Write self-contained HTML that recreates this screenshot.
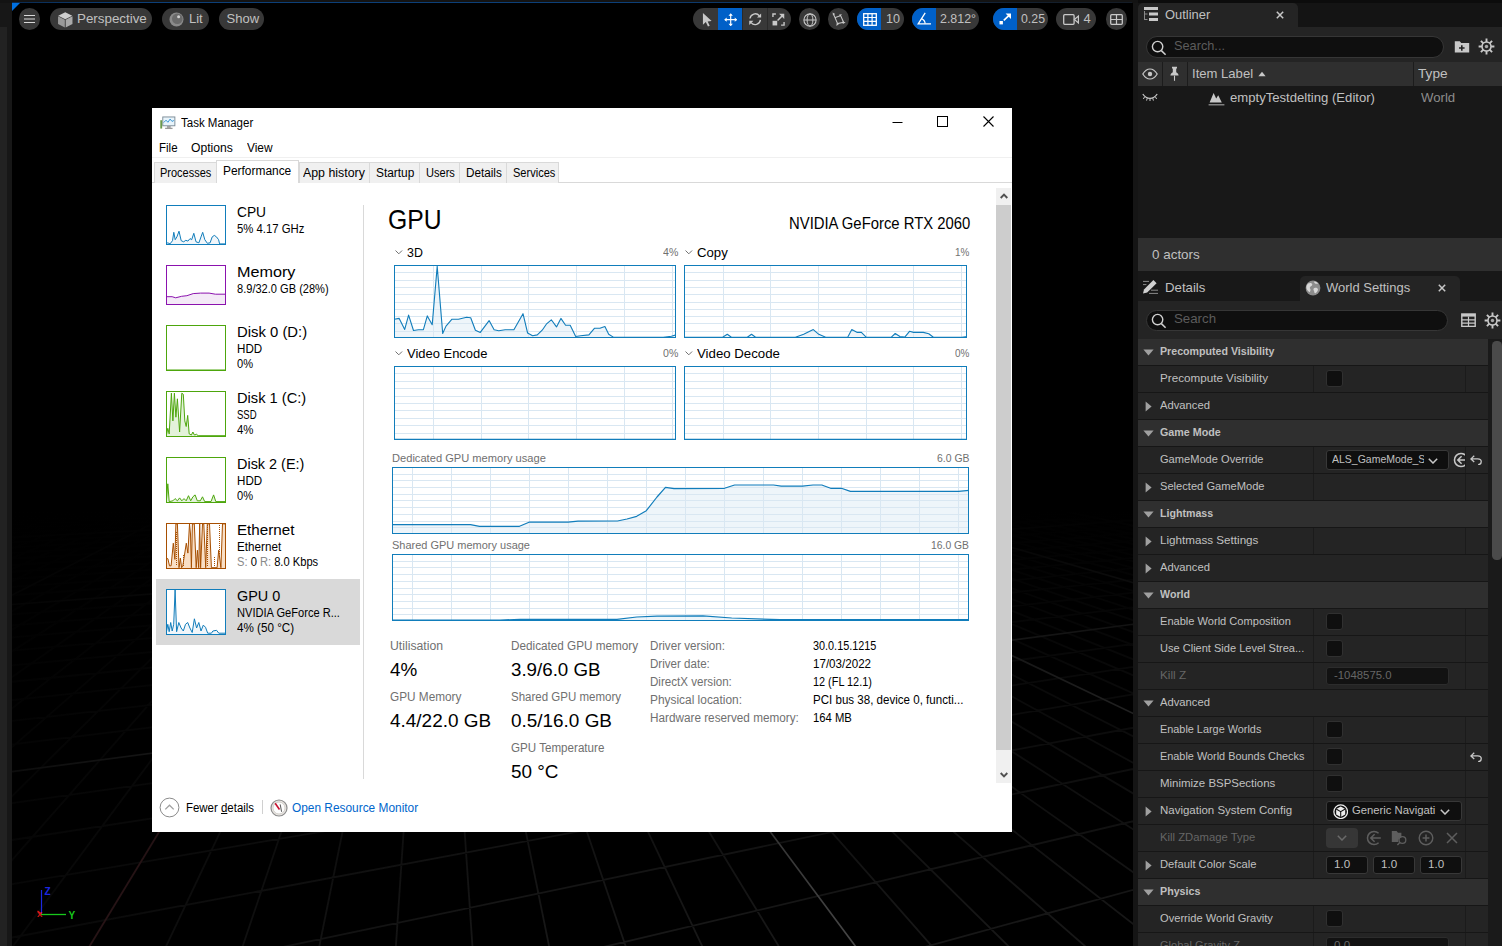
<!DOCTYPE html>
<html lang="en">
<head>
<meta charset="utf-8">
<title>Unreal Editor - Task Manager GPU</title>
<style>
*{box-sizing:border-box;margin:0;padding:0}
html,body{width:1502px;height:946px;overflow:hidden;background:#151515;font-family:"Liberation Sans",sans-serif}
#root{position:relative;width:1502px;height:946px;overflow:hidden;background:#151515}
#root div,#root span,#root svg{position:absolute}
.t{white-space:nowrap;line-height:1}
/* UE viewport */
#vp{left:12px;top:3px;width:1121px;height:943px;background:#000;overflow:hidden}
.pill{background:#383838;border-radius:11px;height:22px;top:5px;color:#c0c0c0;font-size:13px}
.pill .t{top:4px}
.blue{background:#0060c8}
/* right panel */
#rp{left:1138px;top:0;width:364px;height:946px;background:#171717;overflow:hidden;color:#c0c0c0;font-size:12px}
/* task manager */
#tm{left:152px;top:108px;width:860px;height:724px;background:#fff;color:#000;font-size:12px;overflow:hidden}
</style>
</head>
<body>
<div id="root">
<!-- left strip -->
<div style="left:0;top:0;width:12px;height:946px;background:#171717"></div>
<div style="left:0;top:27px;width:7px;height:919px;background:#222222"></div>

<div style="left:0;top:0;width:1502px;height:3px;background:#131313"></div>
<div style="left:12px;top:2px;width:1120px;height:1px;background:linear-gradient(90deg,#0a2a50,#0c3f78 10%,#0c3f78 55%,#141c26 96%)"></div>
<!-- VIEWPORT -->
<div id="vp">
<svg style="left:0;top:0" width="1121" height="943" viewBox="12 3 1121 943"><defs><linearGradient id="gf" x1="0" y1="0" x2="0" y2="1"><stop offset="0" stop-color="#000" stop-opacity="1"/><stop offset="0.15" stop-color="#000" stop-opacity="0.85"/><stop offset="1" stop-color="#000" stop-opacity="0"/></linearGradient><linearGradient id="gl" x1="0" y1="0" x2="1" y2="0"><stop offset="0" stop-color="#000" stop-opacity="0.7"/><stop offset="0.3" stop-color="#000" stop-opacity="0.45"/><stop offset="1" stop-color="#000" stop-opacity="0"/></linearGradient></defs><path d="M-42056.6 7602.3L345.6 395.0M-41079.7 7602.3L347.7 395.0M-40102.9 7602.3L349.7 395.0M-39126.0 7602.3L351.7 395.0M-38149.2 7602.3L353.7 395.0M-37172.4 7602.3L355.8 395.0M-36195.5 7602.3L357.8 395.0M-35218.7 7602.3L359.8 395.0M-34241.8 7602.3L361.9 395.0M-32288.1 7602.3L365.9 395.0M-31311.3 7602.3L368.0 395.0M-30334.5 7602.3L370.0 395.0M-29357.6 7602.3L372.0 395.0M-28380.8 7602.3L374.1 395.0M-27403.9 7602.3L376.1 395.0M-26427.1 7602.3L378.1 395.0M-25450.2 7602.3L380.2 395.0M-24473.4 7602.3L382.2 395.0M-22519.7 7602.3L386.3 395.0M-21542.9 7602.3L388.3 395.0M-20566.0 7602.3L390.3 395.0M-19589.2 7602.3L392.4 395.0M-18612.3 7602.3L394.4 395.0M-17635.5 7602.3L396.4 395.0M-16658.6 7602.3L398.4 395.0M-15681.8 7602.3L400.5 395.0M-14705.0 7602.3L402.5 395.0M-12751.3 7602.3L406.6 395.0M-11774.4 7602.3L408.6 395.0M-10797.6 7602.3L410.6 395.0M-9820.7 7602.3L412.7 395.0M-8843.9 7602.3L414.7 395.0M-7867.0 7602.3L416.7 395.0M-6890.2 7602.3L418.8 395.0M-5913.4 7602.3L420.8 395.0M-4936.5 7602.3L422.8 395.0M-2982.8 7602.3L426.9 395.0M-2006.0 7602.3L428.9 395.0M-1029.1 7602.3L431.0 395.0M-52.3 7602.3L433.0 395.0M924.5 7602.3L435.0 395.0M1901.4 7602.3L437.1 395.0M2878.2 7602.3L439.1 395.0M3855.1 7602.3L441.1 395.0M4831.9 7602.3L443.1 395.0M6785.6 7602.3L447.2 395.0M7762.4 7602.3L449.2 395.0M8739.3 7602.3L451.3 395.0M9716.1 7602.3L453.3 395.0M10693.0 7602.3L455.3 395.0M11669.8 7602.3L457.4 395.0M12646.7 7602.3L459.4 395.0M13623.5 7602.3L461.4 395.0M14600.4 7602.3L463.5 395.0M16554.0 7602.3L467.5 395.0M17530.9 7602.3L469.6 395.0M18507.7 7602.3L471.6 395.0M19484.6 7602.3L473.6 395.0M20461.4 7602.3L475.7 395.0M21438.3 7602.3L477.7 395.0M22415.1 7602.3L479.7 395.0M23391.9 7602.3L481.8 395.0M24368.8 7602.3L483.8 395.0M26322.5 7602.3L487.8 395.0M27299.3 7602.3L489.9 395.0M28276.2 7602.3L491.9 395.0M29253.0 7602.3L493.9 395.0M30229.9 7602.3L496.0 395.0M31206.7 7602.3L498.0 395.0M32183.5 7602.3L500.0 395.0M33160.4 7602.3L502.1 395.0M34137.2 7602.3L504.1 395.0M36090.9 7602.3L508.2 395.0M37067.8 7602.3L510.2 395.0M38044.6 7602.3L512.2 395.0M39021.4 7602.3L514.3 395.0M39998.3 7602.3L516.3 395.0M40975.1 7602.3L518.3 395.0M41952.0 7602.3L520.4 395.0M42928.8 7602.3L522.4 395.0M43905.7 7602.3L524.4 395.0M45859.3 7602.3L528.5 395.0M46836.2 7602.3L530.5 395.0M47813.0 7602.3L532.5 395.0M48789.9 7602.3L534.6 395.0M49766.7 7602.3L536.6 395.0M50743.6 7602.3L538.6 395.0M51720.4 7602.3L540.7 395.0M52697.3 7602.3L542.7 395.0M53674.1 7602.3L544.7 395.0M-5733.8 6704.5L2880.3 460.3M-20885.9 9884.8L2796.3 457.5M-20995.1 8171.8L2756.4 456.2M-21070.9 6982.0L2717.9 455.0M-21126.7 6107.4L2680.6 453.7M-45476.9 10525.6L2644.5 452.6M-40918.1 8597.3L2609.5 451.4M-37815.6 7284.9L2575.6 450.3M-35567.5 6334.0L2542.8 449.2M-73623.4 11259.0L2511.0 448.2M-56170.7 7616.9L2450.1 446.2M-51198.2 6579.3L2421.0 445.2M-47472.8 5801.8L2392.7 444.3M-88092.0 9604.7L2365.2 443.4M-76380.5 7982.6L2338.5 442.5M-68172.0 6845.6L2312.5 441.7M-62099.2 6004.5L2287.2 440.8M-116299.8 10207.1L2262.5 440.0M-98741.0 8387.1L2238.5 439.2M-77861.3 6222.9L2192.4 437.7M-148449.2 10893.7L2170.2 437.0M-123614.8 8837.1L2148.6 436.3M-106906.7 7453.4L2127.5 435.6M-94897.0 6458.9L2106.9 434.9M-185428.2 11683.4L2086.8 434.2M-151450.8 9340.7L2067.2 433.6M-129139.8 7802.3L2048.0 433.0M-113366.9 6714.8L2029.3 432.4M-182811.8 9908.0L1993.1 431.2M-153679.9 8187.4L1975.7 430.6M-133460.1 6993.2L1958.6 430.0M-118605.4 6115.8L1941.9 429.5M-218412.5 10552.1L1925.5 429.0M-180905.7 8614.6L1909.5 428.4M-155400.5 7297.1L1893.9 427.9M-136931.0 6343.1L1878.5 427.4M-259175.0 11289.5L1863.5 426.9M-179455.2 7630.4L1834.4 426.0M-156769.0 6589.1L1820.3 425.5M-139780.7 5809.4L1806.5 425.0M-245394.7 9626.6L1792.9 424.6M-205945.1 7997.4L1779.6 424.2M-178314.4 6856.4L1766.6 423.7M-157883.3 6012.6L1753.8 423.3M-283972.3 10232.0L1741.3 422.9M-235259.9 8403.6L1729.0 422.5M-177393.7 6231.6L1705.0 421.7M-77020.4 2928.7L1693.4 421.3M-49075.3 2009.2L1682.0 421.0M-35948.7 1577.2L1670.8 420.6M-28323.9 1326.3L1659.7 420.2M-23341.3 1162.4L1648.9 419.9M-19830.3 1046.8L1638.3 419.5M-17222.9 961.0L1627.8 419.2M-15209.9 894.8L1617.6 418.8M-12305.3 799.2L1597.5 418.2M-11223.1 763.6L1587.8 417.9M-10310.3 733.6L1578.2 417.6M-9530.2 707.9L1568.8 417.2M-8855.6 685.7L1559.5 416.9M-8266.6 666.3L1550.3 416.6M-7747.8 649.2L1541.4 416.3M-7287.5 634.1L1532.5 416.1M-6876.1 620.5L1523.8 415.8M-6172.3 597.4L1506.8 415.2M-5868.8 587.4L1498.5 414.9" stroke="#181818" stroke-width="1.8" fill="none"/><path d="M-43033.4 7602.3L343.6 395.0M-33265.0 7602.3L363.9 395.0M-23496.5 7602.3L384.2 395.0M-13728.1 7602.3L404.5 395.0M5808.8 7602.3L445.2 395.0M15577.2 7602.3L465.5 395.0M25345.6 7602.3L485.8 395.0M35114.1 7602.3L506.1 395.0M44882.5 7602.3L526.5 395.0M-7744.7 5897.4L2837.6 458.9M-63142.7 9071.9L2480.1 447.2M-86669.8 7135.9L2215.2 438.5M-101625.4 5905.2L2011.0 431.8M-211283.6 9091.3L1848.8 426.4M-201797.8 7147.6L1716.9 422.1M-13609.0 842.1L1607.5 418.5M-6506.4 608.4L1515.2 415.5" stroke="#464646" stroke-width="1.700" fill="none"/><path d="M-3959.7 7602.3L424.9 395.0" stroke="#5a2d32" stroke-width="1.8" fill="none"/><rect x="12" y="3" width="1121" height="507" fill="#000"/><rect x="12" y="500" width="500" height="446" fill="url(#gl)"/><rect x="12" y="510" width="1121" height="436" fill="url(#gf)"/><path d="M41.5 914V890" stroke="#1c28e0" stroke-width="1.2"/><path d="M41 914.5H66" stroke="#18c81c" stroke-width="1.3"/><path d="M41.5 914l-4-3" stroke="#e01818" stroke-width="1.3"/><text x="44.5" y="895" font-family="Liberation Sans,sans-serif" font-size="10" font-weight="bold" fill="#1c28e0">Z</text><text x="68.5" y="918.5" font-family="Liberation Sans,sans-serif" font-size="10" font-weight="bold" fill="#18c81c">Y</text><text x="37" y="917" font-family="Liberation Sans,sans-serif" font-size="8" font-weight="bold" fill="#e01818">X</text></svg>
<svg style="left:0;top:0" width="9" height="9"><polygon points="0,0 8,0 0,8" fill="#0070e0"/></svg>
<div class="pill" style="left:7px;width:21px"><svg style="left:4px;top:5px" width="13" height="12"><path d="M1 2.5h11M1 6h11M1 9.5h11" stroke="#d8d8d8" stroke-width="1" fill="none"/></svg></div>
<div class="pill" style="left:38px;width:102px"><svg style="left:6.500px;top:2.500px" width="16.500" height="17.500" viewBox="0 0 16 16"><polygon points="8,0.8 14.8,4 8,7.4 1.2,4" fill="#cfcfcf"/><polygon points="1,4.6 7.6,8 7.6,15.4 1,12" fill="#9a9a9a"/><polygon points="15,4.6 8.4,8 8.4,15.4 15,12" fill="#aaaaaa"/></svg><span class="t" style="left:26.70px;top:4px;font-size:13px;transform:scaleX(1.0277);transform-origin:0 0;">Perspective</span></div>
<div class="pill" style="left:150px;width:46.5px"><svg style="left:7px;top:3.5px" width="15" height="15" viewBox="0 0 15 15"><circle cx="7.5" cy="7.5" r="7" fill="#8a8a8a"/><circle cx="8.3" cy="6.7" r="5.3" fill="#6a6a6a"/><circle cx="9.6" cy="4.8" r="1.5" fill="#d0d0d0"/></svg><span class="t" style="left:27px;top:4px;">Lit</span></div>
<div class="pill" style="left:207px;width:45px"><span class="t" style="left:7.5px;top:4px;">Show</span></div>
<div class="pill" style="left:681px;width:98px;overflow:hidden"><div class="blue" style="left:25px;top:0;width:24px;height:22px"></div><div style="left:49px;top:0;width:1px;height:22px;background:#2a2a2a"></div><div style="left:74px;top:0;width:1px;height:22px;background:#2a2a2a"></div><svg style="left:6.700px;top:3.500px" width="13.600" height="15.500" viewBox="0 0 14 16"><path d="M3 1 L3 13.2 L6 10.4 L8.2 15 L10 14.2 L7.9 9.7 L12 9.4 Z" fill="#c8c8c8"/></svg><svg style="left:30.800px;top:4.800px" width="13.400" height="13.400" viewBox="0 0 16 16"><path d="M8 1.2v13.6M1.2 8h13.6" stroke="#fff" stroke-width="1.4" fill="none"/><path d="M8 0.2l2.6 3H5.4zM8 15.8l2.6-3H5.4zM0.2 8l3-2.6v5.2zM15.8 8l-3-2.6v5.2z" fill="#fff"/></svg><svg style="left:54.800px;top:4.400px" width="14.400" height="14.400" viewBox="0 0 16 16"><path d="M2.2 7.2A5.9 5.9 0 0 1 12.6 4.2" stroke="#c8c8c8" stroke-width="1.5" fill="none"/><path d="M13.8 8.8A5.9 5.9 0 0 1 3.4 11.8" stroke="#c8c8c8" stroke-width="1.5" fill="none"/><path d="M14.6 1.6v4.6H10z" fill="#c8c8c8"/><path d="M1.4 14.4V9.8H6z" fill="#c8c8c8"/></svg><svg style="left:79px;top:5.400px" width="13" height="13" viewBox="0 0 14 14"><path d="M1 4.2V1h3.2M9.8 13H13V9.8M1 9.8" stroke="#c8c8c8" stroke-width="1.5" fill="none"/><rect x="0.6" y="8.4" width="5" height="5" fill="#c8c8c8"/><path d="M6 8L12 2" stroke="#c8c8c8" stroke-width="1.6"/><path d="M7.6 0.8H13.2V6.4z" fill="#c8c8c8"/></svg></div>
<div class="pill" style="left:787px;width:21px"><svg style="left:3.700px;top:4.500px" width="14" height="14" viewBox="0 0 14 14"><circle cx="7" cy="7" r="6.1" stroke="#c8c8c8" stroke-width="1.1" fill="none"/><ellipse cx="7" cy="7" rx="2.9" ry="6.1" stroke="#c8c8c8" stroke-width="1" fill="none"/><path d="M0.9 7h12.2" stroke="#c8c8c8" stroke-width="1"/></svg></div>
<div class="pill" style="left:816px;width:21px"><svg style="left:2.700px;top:4px" width="15" height="15" viewBox="0 0 15 15"><path d="M2.6 2.4L6.6 11.6L12.6 10.2M4.4 5.6L9.6 3.6L12.6 10.2" stroke="#c8c8c8" stroke-width="1.1" fill="none"/><path d="M1.6 0.4L4.2 2 2 3.6zM14.6 10.6l-2.800 1.400-.4-2.800zM5.400 14l.2-2.800 2.400.8zM11 2.200L8.800 4.800 8.200 2.400z" fill="#c8c8c8"/></svg></div>
<div class="pill" style="left:845px;width:47px;overflow:hidden"><div class="blue" style="left:0;top:0;width:24px;height:22px"></div><svg style="left:6px;top:4.5px" width="14" height="13" viewBox="0 0 14 13"><rect x="0.7" y="0.7" width="12.6" height="11.6" stroke="#fff" stroke-width="1.3" fill="none"/><path d="M4.9 0.7v11.6M9.1 0.7v11.6M0.7 4.5h12.6M0.7 8.4h12.6" stroke="#fff" stroke-width="1.2"/></svg><span class="t" style="left:29.10px;top:4px;font-size:13px;transform:scaleX(0.9682);transform-origin:0 0;">10</span></div>
<div class="pill" style="left:900px;width:67px;overflow:hidden"><div class="blue" style="left:0;top:0;width:24px;height:22px"></div><svg style="left:5px;top:4px" width="15" height="13" viewBox="0 0 15 13"><path d="M8.2 0.8L1.2 11.8H14" stroke="#fff" stroke-width="1.3" fill="none"/><path d="M4.4 6.6A6 6 0 0 1 8.2 11.6" stroke="#fff" stroke-width="1.2" fill="none"/></svg><span class="t" style="left:27.90px;top:4px;font-size:13px;transform:scaleX(0.9541);transform-origin:0 0;">2.812°</span></div>
<div class="pill" style="left:981px;width:55px;overflow:hidden"><div class="blue" style="left:0;top:0;width:24px;height:22px"></div><svg style="left:6px;top:5px" width="13" height="12" viewBox="0 0 13 12"><rect x="0.5" y="8" width="3.4" height="3.4" fill="#fff"/><path d="M4.8 7.4L10.6 1.8" stroke="#fff" stroke-width="1.6"/><path d="M6.6 0.6H12V6z" fill="#fff"/></svg><span class="t" style="left:28.00px;top:4px;font-size:13px;transform:scaleX(0.9485);transform-origin:0 0;">0.25</span></div>
<div class="pill" style="left:1044px;width:40px"><svg style="left:6.5px;top:5.5px" width="17" height="11" viewBox="0 0 17 11"><rect x="0.7" y="0.7" width="10.4" height="9.6" rx="1" stroke="#c8c8c8" stroke-width="1.3" fill="none"/><path d="M11.4 5.5L15.4 2V9z" stroke="#c8c8c8" stroke-width="1.2" fill="none"/></svg><span class="t" style="left:27.5px;top:4px;">4</span></div>
<div class="pill" style="left:1094px;width:21px"><svg style="left:4px;top:5.5px" width="13" height="11" viewBox="0 0 13 11"><rect x="0.7" y="0.7" width="11.6" height="9.6" rx="1" stroke="#c8c8c8" stroke-width="1.3" fill="none"/><path d="M6.5 0.7v9.6M0.7 5.5h11.6" stroke="#c8c8c8" stroke-width="1.2"/></svg></div>
</div>

<!-- TASK MANAGER -->
<div id="tm">
<div id="tmo" style="left:-152px;top:-108px;width:1502px;height:946px">
<svg style="left:160px;top:116px" width="15.800" height="14" viewBox="0 0 17 15"><rect x="3" y="1" width="13" height="9.5" fill="#e8f4fb" stroke="#7a8a96" stroke-width="1"/><path d="M4 7l2.5-2.5 2 2.2 2.4-3.4 2 2.5 2-1" stroke="#2a8fd0" stroke-width="1" fill="none"/><rect x="7.5" y="11" width="4" height="1.6" fill="#8a8a8a"/><rect x="5.5" y="12.6" width="8" height="1.4" fill="#9a9a9a"/><rect x="0.3" y="4.5" width="2" height="9" fill="#6a9a4a"/></svg>
<span class="t" style="left:180.88px;top:117px;font-size:12px;transform:scaleX(0.9585);transform-origin:0 0;">Task Manager</span>
<svg style="left:892px;top:116px" width="12" height="12"><path d="M0.5 6.5h10" stroke="#000" stroke-width="1"/></svg>
<svg style="left:937px;top:116px" width="12" height="12"><rect x="0.5" y="0.5" width="10" height="10" stroke="#000" stroke-width="1" fill="none"/></svg>
<svg style="left:983px;top:116px" width="12" height="12"><path d="M0.5 0.5l10 10M10.5 0.5l-10 10" stroke="#000" stroke-width="1.1"/></svg>
<span class="t" style="left:159.28px;top:142px;font-size:12px;transform:scaleX(0.9588);transform-origin:0 0;">File</span>
<span class="t" style="left:191.18px;top:142px;font-size:12px;transform:scaleX(1.0117);transform-origin:0 0;">Options</span>
<span class="t" style="left:246.68px;top:142px;font-size:12px;transform:scaleX(0.9902);transform-origin:0 0;">View</span>
<div style="left:152px;top:156.5px;width:860px;height:1.5px;background:#f0f0f0;"></div>
<div style="left:152px;top:182px;width:860px;height:1px;background:#d9d9d9;"></div>
<div style="left:154px;top:162px;width:62.5px;height:21px;background:#f0f0f0;border:1px solid #d9d9d9;border-bottom:none"></div>
<span class="t" style="left:160.08px;top:167px;font-size:12px;transform:scaleX(0.9146);transform-origin:0 0;">Processes</span>
<div style="left:298.6px;top:162px;width:71.69999999999999px;height:21px;background:#f0f0f0;border:1px solid #d9d9d9;border-bottom:none"></div>
<span class="t" style="left:302.58px;top:167px;font-size:12px;transform:scaleX(1.0302);transform-origin:0 0;">App history</span>
<div style="left:369.3px;top:162px;width:51.0px;height:21px;background:#f0f0f0;border:1px solid #d9d9d9;border-bottom:none"></div>
<span class="t" style="left:375.58px;top:167px;font-size:12px;transform:scaleX(0.9910);transform-origin:0 0;">Startup</span>
<div style="left:419.3px;top:162px;width:41.0px;height:21px;background:#f0f0f0;border:1px solid #d9d9d9;border-bottom:none"></div>
<span class="t" style="left:425.58px;top:167px;font-size:12px;transform:scaleX(0.9203);transform-origin:0 0;">Users</span>
<div style="left:459.3px;top:162px;width:48.0px;height:21px;background:#f0f0f0;border:1px solid #d9d9d9;border-bottom:none"></div>
<span class="t" style="left:465.58px;top:167px;font-size:12px;transform:scaleX(0.9771);transform-origin:0 0;">Details</span>
<div style="left:506.3px;top:162px;width:52.69999999999999px;height:21px;background:#f0f0f0;border:1px solid #d9d9d9;border-bottom:none"></div>
<span class="t" style="left:512.58px;top:167px;font-size:12px;transform:scaleX(0.9202);transform-origin:0 0;">Services</span>
<div style="left:215.5px;top:160px;width:83.5px;height:23px;background:#fff;border:1px solid #d9d9d9;border-bottom:none"></div>
<span class="t" style="left:223.18px;top:165px;font-size:12px;transform:scaleX(0.9934);transform-origin:0 0;">Performance</span>
<div style="left:156px;top:579px;width:204px;height:66px;background:#d9d9d9;"></div>
<div style="left:363px;top:205px;width:1px;height:574px;background:#d9d9d9;"></div>
<svg style="left:166px;top:205px" width="60" height="40" viewBox="166 205 60 40"><rect x="166" y="205" width="60" height="40" fill="#fff"/><path d="M165.9 243.9 L167.8 242.8 L170.0 243.9 L172.5 240.7 L173.8 232.3 L175.2 239.7 L176.9 236.9 L179.0 231.2 L181.2 240.7 L183.7 241.8 L185.8 240.3 L187.9 241.1 L190.0 238.6 L191.7 239.7 L193.8 233.3 L196.0 241.8 L198.9 242.8 L201.0 236.9 L202.7 232.3 L204.8 239.7 L207.4 243.3 L210.1 242.8 L212.2 236.9 L214.3 235.4 L216.5 236.9 L218.6 239.7 L219.6 243.9 L226.0 243.9 L226.0 245 L165.9 245 Z" fill="#f1f6fa"/><path d="" stroke="#fff" stroke-width="1" fill="none" shape-rendering="crispEdges"/><path d="M165.9 243.9 L167.8 242.8 L170.0 243.9 L172.5 240.7 L173.8 232.3 L175.2 239.7 L176.9 236.9 L179.0 231.2 L181.2 240.7 L183.7 241.8 L185.8 240.3 L187.9 241.1 L190.0 238.6 L191.7 239.7 L193.8 233.3 L196.0 241.8 L198.9 242.8 L201.0 236.9 L202.7 232.3 L204.8 239.7 L207.4 243.3 L210.1 242.8 L212.2 236.9 L214.3 235.4 L216.5 236.9 L218.6 239.7 L219.6 243.9 L226.0 243.9" stroke="#117dbb" stroke-width="1" fill="none" stroke-linejoin="round"/><rect x="166.5" y="205.5" width="59" height="39" fill="none" stroke="#117dbb" stroke-width="1" shape-rendering="crispEdges"/></svg>
<svg style="left:166px;top:265px" width="60" height="40" viewBox="166 265 60 40"><rect x="166" y="265" width="60" height="40" fill="#fff"/><path d="M165.9 296.7 L172.1 296.7 L175.7 297.8 L181.6 296.3 L186.9 295.7 L193.2 293.6 L200.6 293.1 L209.1 293.1 L215.4 294.2 L226.0 294.2 L226.0 305 L165.9 305 Z" fill="#f4eaf7"/><path d="" stroke="#fff" stroke-width="1" fill="none" shape-rendering="crispEdges"/><path d="M165.9 296.7 L172.1 296.7 L175.7 297.8 L181.6 296.3 L186.9 295.7 L193.2 293.6 L200.6 293.1 L209.1 293.1 L215.4 294.2 L226.0 294.2" stroke="#8b12ae" stroke-width="1" fill="none" stroke-linejoin="round"/><rect x="166.5" y="265.5" width="59" height="39" fill="none" stroke="#8b12ae" stroke-width="1" shape-rendering="crispEdges"/></svg>
<svg style="left:166px;top:325px" width="60" height="46" viewBox="166 325 60 46"><rect x="166" y="325" width="60" height="46" fill="#fff"/><path d="M166.5 370.0 L225.5 370.0 L225.5 371 L166.5 371 Z" fill="#eff7e9"/><path d="" stroke="#fff" stroke-width="1" fill="none" shape-rendering="crispEdges"/><path d="M166.5 370.0 L225.5 370.0" stroke="#4da60c" stroke-width="1" fill="none" stroke-linejoin="round"/><rect x="166.5" y="325.5" width="59" height="45" fill="none" stroke="#4da60c" stroke-width="1" shape-rendering="crispEdges"/></svg>
<svg style="left:166px;top:391px" width="60" height="46" viewBox="166 391 60 46"><rect x="166" y="391" width="60" height="46" fill="#fff"/><path d="M166.3 435.7 L167.8 428.3 L169.2 433.9 L171.4 393.2 L172.9 420.9 L174.4 393.2 L175.9 417.2 L177.4 398.8 L179.6 432.0 L181.8 393.2 L183.3 394.3 L184.8 420.9 L186.2 426.5 L187.7 415.4 L189.2 433.9 L191.4 435.0 L192.9 432.0 L194.4 435.0 L196.6 434.3 L198.1 435.7 L225.8 435.7 L225.8 437 L166.3 437 Z" fill="#e3f2da"/><path d="" stroke="#fff" stroke-width="1" fill="none" shape-rendering="crispEdges"/><path d="M166.3 435.7 L167.8 428.3 L169.2 433.9 L171.4 393.2 L172.9 420.9 L174.4 393.2 L175.9 417.2 L177.4 398.8 L179.6 432.0 L181.8 393.2 L183.3 394.3 L184.8 420.9 L186.2 426.5 L187.7 415.4 L189.2 433.9 L191.4 435.0 L192.9 432.0 L194.4 435.0 L196.6 434.3 L198.1 435.7 L225.8 435.7" stroke="#4da60c" stroke-width="1" fill="none" stroke-linejoin="round"/><rect x="166.5" y="391.5" width="59" height="45" fill="none" stroke="#4da60c" stroke-width="1" shape-rendering="crispEdges"/></svg>
<svg style="left:166px;top:457px" width="60" height="46" viewBox="166 457 60 46"><rect x="166" y="457" width="60" height="46" fill="#fff"/><path d="M166.3 501.6 L167.8 483.8 L169.2 501.6 L172.9 500.8 L175.1 498.6 L177.4 500.8 L179.6 497.9 L181.8 500.8 L184.0 498.6 L186.2 500.8 L188.5 495.7 L190.7 500.8 L192.9 496.8 L195.1 494.9 L197.3 500.8 L200.3 500.8 L202.5 496.8 L204.7 501.6 L211.0 501.6 L213.6 494.9 L215.8 501.6 L225.8 501.6 L225.8 503 L166.3 503 Z" fill="#e3f2da"/><path d="" stroke="#fff" stroke-width="1" fill="none" shape-rendering="crispEdges"/><path d="M166.3 501.6 L167.8 483.8 L169.2 501.6 L172.9 500.8 L175.1 498.6 L177.4 500.8 L179.6 497.9 L181.8 500.8 L184.0 498.6 L186.2 500.8 L188.5 495.7 L190.7 500.8 L192.9 496.8 L195.1 494.9 L197.3 500.8 L200.3 500.8 L202.5 496.8 L204.7 501.6 L211.0 501.6 L213.6 494.9 L215.8 501.6 L225.8 501.6" stroke="#4da60c" stroke-width="1" fill="none" stroke-linejoin="round"/><rect x="166.5" y="457.5" width="59" height="45" fill="none" stroke="#4da60c" stroke-width="1" shape-rendering="crispEdges"/></svg>
<svg style="left:166px;top:523px" width="60" height="46" viewBox="166 523 60 46"><rect x="166" y="523" width="60" height="46" fill="#fff"/><path d="M166.3 558.1 L167.9 558.8 L169.5 565.8 L171.1 565.8 L173.3 543.2 L174.9 559.4 L175.9 523.9 L177.4 523.9 L179.0 567.7 L180.4 558.1 L181.6 567.7 L182.8 565.8 L186.3 543.2 L187.9 553.1 L189.5 523.9 L190.5 534.0 L191.4 567.7 L192.4 523.9 L194.3 523.9 L196.2 567.7 L197.4 550.2 L198.7 567.7 L199.7 523.9 L200.6 567.7 L202.5 523.9 L203.8 523.9 L205.7 567.7 L207.3 523.9 L209.5 523.9 L211.4 567.7 L217.1 567.7 L218.7 550.2 L220.9 567.7 L222.5 523.9 L223.5 523.9 L225.7 523.9 L225.7 569 L166.3 569 Z" fill="#f9dfc6"/><path d="" stroke="#fff" stroke-width="1" fill="none" shape-rendering="crispEdges"/><path d="M166.3 558.1 L167.9 558.8 L169.5 565.8 L171.1 565.8 L173.3 543.2 L174.9 559.4 L175.9 523.9 L177.4 523.9 L179.0 567.7 L180.4 558.1 L181.6 567.7 L182.8 565.8 L186.3 543.2 L187.9 553.1 L189.5 523.9 L190.5 534.0 L191.4 567.7 L192.4 523.9 L194.3 523.9 L196.2 567.7 L197.4 550.2 L198.7 567.7 L199.7 523.9 L200.6 567.7 L202.5 523.9 L203.8 523.9 L205.7 567.7 L207.3 523.9 L209.5 523.9 L211.4 567.7 L217.1 567.7 L218.7 550.2 L220.9 567.7 L222.5 523.9 L223.5 523.9 L225.7 523.9" stroke="#a74f01" stroke-width="1" fill="none" stroke-linejoin="round"/><rect x="166.5" y="523.5" width="59" height="45" fill="none" stroke="#a74f01" stroke-width="1" shape-rendering="crispEdges"/></svg>
<svg style="left:166px;top:523px" width="60" height="46" viewBox="166 523 60 46"><path d="M176.500 532v34M183.500 555v11M207.500 525v41M214.500 557v9M219.500 525v30" stroke="#a74f01" stroke-width="1" stroke-dasharray="1 1" fill="none"/></svg>
<svg style="left:166px;top:589px" width="60" height="46" viewBox="166 589 60 46"><rect x="166" y="589" width="60" height="46" fill="#fff"/><path d="M166.3 632.5 L167.8 624.3 L169.2 631.7 L170.7 622.5 L172.2 631.0 L173.7 624.3 L175.1 590.0 L176.6 631.7 L178.8 622.5 L181.1 628.0 L183.3 631.0 L185.5 624.3 L187.7 622.5 L189.9 628.0 L192.2 632.5 L194.4 618.8 L196.6 628.0 L198.8 622.5 L201.0 631.0 L203.3 625.1 L205.5 627.3 L207.7 633.2 L211.4 633.2 L212.9 631.0 L216.6 630.3 L218.8 633.2 L225.8 633.2 L225.8 635 L166.3 635 Z" fill="#f1f6fa"/><path d="" stroke="#fff" stroke-width="1" fill="none" shape-rendering="crispEdges"/><path d="M166.3 632.5 L167.8 624.3 L169.2 631.7 L170.7 622.5 L172.2 631.0 L173.7 624.3 L175.1 590.0 L176.6 631.7 L178.8 622.5 L181.1 628.0 L183.3 631.0 L185.5 624.3 L187.7 622.5 L189.9 628.0 L192.2 632.5 L194.4 618.8 L196.6 628.0 L198.8 622.5 L201.0 631.0 L203.3 625.1 L205.5 627.3 L207.7 633.2 L211.4 633.2 L212.9 631.0 L216.6 630.3 L218.8 633.2 L225.8 633.2" stroke="#117dbb" stroke-width="1" fill="none" stroke-linejoin="round"/><rect x="166.5" y="589.5" width="59" height="45" fill="none" stroke="#117dbb" stroke-width="1" shape-rendering="crispEdges"/></svg>
<span class="t" style="left:236.67px;top:204px;font-size:15px;transform:scaleX(0.9173);transform-origin:0 0;">CPU</span>
<span class="t" style="left:236.78px;top:223px;font-size:12px;transform:scaleX(0.9436);transform-origin:0 0;">5% 4.17 GHz</span>
<span class="t" style="left:236.67px;top:264px;font-size:15px;transform:scaleX(1.0790);transform-origin:0 0;">Memory</span>
<span class="t" style="left:236.78px;top:283px;font-size:12px;transform:scaleX(0.9221);transform-origin:0 0;">8.9/32.0 GB (28%)</span>
<span class="t" style="left:236.67px;top:324px;font-size:15px;transform:scaleX(0.9904);transform-origin:0 0;">Disk 0 (D:)</span>
<span class="t" style="left:236.78px;top:343px;font-size:12px;transform:scaleX(0.9670);transform-origin:0 0;">HDD</span>
<span class="t" style="left:236.78px;top:358px;font-size:12px;transform:scaleX(0.9248);transform-origin:0 0;">0%</span>
<span class="t" style="left:236.67px;top:390px;font-size:15px;transform:scaleX(0.9762);transform-origin:0 0;">Disk 1 (C:)</span>
<span class="t" style="left:236.78px;top:409px;font-size:12px;transform:scaleX(0.7960);transform-origin:0 0;">SSD</span>
<span class="t" style="left:236.78px;top:424px;font-size:12px;transform:scaleX(0.9479);transform-origin:0 0;">4%</span>
<span class="t" style="left:236.67px;top:456px;font-size:15px;transform:scaleX(0.9621);transform-origin:0 0;">Disk 2 (E:)</span>
<span class="t" style="left:236.78px;top:475px;font-size:12px;transform:scaleX(0.9670);transform-origin:0 0;">HDD</span>
<span class="t" style="left:236.78px;top:490px;font-size:12px;transform:scaleX(0.9248);transform-origin:0 0;">0%</span>
<span class="t" style="left:236.67px;top:522px;font-size:15px;transform:scaleX(1.0114);transform-origin:0 0;">Ethernet</span>
<span class="t" style="left:236.78px;top:541px;font-size:12px;transform:scaleX(0.9730);transform-origin:0 0;">Ethernet</span>
<span class="t" style="left:236.67px;top:588px;font-size:15px;transform:scaleX(0.9608);transform-origin:0 0;">GPU 0</span>
<span class="t" style="left:236.78px;top:607px;font-size:12px;transform:scaleX(0.9244);transform-origin:0 0;">NVIDIA GeForce R...</span>
<span class="t" style="left:236.78px;top:622px;font-size:12px;transform:scaleX(0.9715);transform-origin:0 0;">4% (50 °C)</span>
<span class="t" style="left:236.78px;top:556px;font-size:12px;transform:scaleX(0.9286);transform-origin:0 0;"><span style="position:static;color:#8a8a8a">S:</span> 0 <span style="position:static;color:#8a8a8a">R:</span> 8.0 Kbps</span>
<span class="t" style="left:388.04px;top:206px;font-size:27.5px;transform:scaleX(0.8982);transform-origin:0 0;">GPU</span>
<span class="t" style="left:789.44px;top:216px;font-size:16px;transform:scaleX(0.9282);transform-origin:0 0;">NVIDIA GeForce RTX 2060</span>
<svg style="left:394px;top:265px" width="282" height="73" viewBox="394 265 282 73"><rect x="394" y="265" width="282" height="73" fill="#fff"/><path d="M394.3 319.2 L399.2 318.4 L404.7 329.4 L408.6 315.1 L413.5 330.5 L418.5 329.7 L423.4 329.7 L427.3 315.9 L432.2 324.7 L437.2 266.4 L442.7 333.5 L446.0 326.1 L452.0 319.2 L458.4 319.2 L466.6 317.3 L470.7 317.8 L475.4 330.2 L480.3 332.4 L489.1 320.6 L494.1 329.7 L498.8 330.8 L505.1 329.7 L513.9 329.7 L523.0 313.7 L527.6 333.0 L532.6 335.7 L537.3 334.9 L542.2 330.2 L546.3 324.2 L551.3 319.8 L556.5 326.9 L560.9 318.4 L565.6 325.3 L570.2 325.3 L575.7 336.5 L580.7 335.7 L588.9 334.9 L594.4 328.3 L599.9 328.3 L604.9 326.6 L608.7 334.3 L613.7 337.4 L663.2 337.4 L671.4 336.3 L676.1 334.9 L676.1 338 L394.3 338 Z" fill="#eef5fa"/><path d="M394 272.5H676M394 280.5H676M394 287.5H676M394 294.5H676M394 302.5H676M394 309.5H676M394 316.5H676M394 323.5H676M394 331.5H676M433.5 265V338M481.5 265V338M528.5 265V338M576.5 265V338M624.5 265V338M672.5 265V338" stroke="#d9e7f2" stroke-width="1" fill="none" shape-rendering="crispEdges"/><path d="M394.3 319.2 L399.2 318.4 L404.7 329.4 L408.6 315.1 L413.5 330.5 L418.5 329.7 L423.4 329.7 L427.3 315.9 L432.2 324.7 L437.2 266.4 L442.7 333.5 L446.0 326.1 L452.0 319.2 L458.4 319.2 L466.6 317.3 L470.7 317.8 L475.4 330.2 L480.3 332.4 L489.1 320.6 L494.1 329.7 L498.8 330.8 L505.1 329.7 L513.9 329.7 L523.0 313.7 L527.6 333.0 L532.6 335.7 L537.3 334.9 L542.2 330.2 L546.3 324.2 L551.3 319.8 L556.5 326.9 L560.9 318.4 L565.6 325.3 L570.2 325.3 L575.7 336.5 L580.7 335.7 L588.9 334.9 L594.4 328.3 L599.9 328.3 L604.9 326.6 L608.7 334.3 L613.7 337.4 L663.2 337.4 L671.4 336.3 L676.1 334.9" stroke="#117dbb" stroke-width="1.1" fill="none" stroke-linejoin="round"/><rect x="394.5" y="265.5" width="281" height="72" fill="none" stroke="#117dbb" stroke-width="1" shape-rendering="crispEdges"/></svg>
<svg style="left:684px;top:265px" width="283" height="73" viewBox="684 265 283 73"><rect x="684" y="265" width="283" height="73" fill="#fff"/><path d="M684.1 337.3 L722.6 337.3 L727.3 334.3 L731.4 337.3 L747.3 337.3 L751.5 334.3 L755.6 337.3 L795.4 337.3 L803.7 334.3 L813.3 329.6 L818.8 334.3 L825.7 337.3 L847.7 337.3 L851.8 329.6 L857.3 332.4 L861.4 332.4 L866.4 337.3 L891.1 337.3 L895.2 333.5 L899.9 336.5 L904.8 337.1 L909.5 331.3 L913.6 332.4 L923.3 332.4 L928.8 333.8 L933.4 337.3 L961.7 337.3 L967.2 336.5 L967.2 338 L684.1 338 Z" fill="#eef5fa"/><path d="M684 272.5H967M684 280.5H967M684 287.5H967M684 294.5H967M684 302.5H967M684 309.5H967M684 316.5H967M684 323.5H967M684 331.5H967M723.5 265V338M770.5 265V338M818.5 265V338M866.5 265V338M913.5 265V338M961.5 265V338" stroke="#d9e7f2" stroke-width="1" fill="none" shape-rendering="crispEdges"/><path d="M684.1 337.3 L722.6 337.3 L727.3 334.3 L731.4 337.3 L747.3 337.3 L751.5 334.3 L755.6 337.3 L795.4 337.3 L803.7 334.3 L813.3 329.6 L818.8 334.3 L825.7 337.3 L847.7 337.3 L851.8 329.6 L857.3 332.4 L861.4 332.4 L866.4 337.3 L891.1 337.3 L895.2 333.5 L899.9 336.5 L904.8 337.1 L909.5 331.3 L913.6 332.4 L923.3 332.4 L928.8 333.8 L933.4 337.3 L961.7 337.3 L967.2 336.5" stroke="#117dbb" stroke-width="1.1" fill="none" stroke-linejoin="round"/><rect x="684.5" y="265.5" width="282" height="72" fill="none" stroke="#117dbb" stroke-width="1" shape-rendering="crispEdges"/></svg>
<svg style="left:394px;top:366px" width="282" height="74" viewBox="394 366 282 74"><rect x="394" y="366" width="282" height="74" fill="#fff"/><path d="M394.5 439.3 L675.5 439.3 L675.5 440 L394.5 440 Z" fill="#eef5fa"/><path d="M394 373.5H676M394 381.5H676M394 388.5H676M394 396.5H676M394 403.5H676M394 410.5H676M394 418.5H676M394 425.5H676M394 433.5H676M433.5 366V440M481.5 366V440M528.5 366V440M576.5 366V440M624.5 366V440M672.5 366V440" stroke="#d9e7f2" stroke-width="1" fill="none" shape-rendering="crispEdges"/><path d="M394.5 439.3 L675.5 439.3" stroke="#117dbb" stroke-width="1.1" fill="none" stroke-linejoin="round"/><rect x="394.5" y="366.5" width="281" height="73" fill="none" stroke="#117dbb" stroke-width="1" shape-rendering="crispEdges"/></svg>
<svg style="left:684px;top:366px" width="283" height="74" viewBox="684 366 283 74"><rect x="684" y="366" width="283" height="74" fill="#fff"/><path d="M684.5 439.3 L966.5 439.3 L966.5 440 L684.5 440 Z" fill="#eef5fa"/><path d="M684 373.5H967M684 381.5H967M684 388.5H967M684 396.5H967M684 403.5H967M684 410.5H967M684 418.5H967M684 425.5H967M684 433.5H967M723.5 366V440M770.5 366V440M818.5 366V440M866.5 366V440M913.5 366V440M961.5 366V440" stroke="#d9e7f2" stroke-width="1" fill="none" shape-rendering="crispEdges"/><path d="M684.5 439.3 L966.5 439.3" stroke="#117dbb" stroke-width="1.1" fill="none" stroke-linejoin="round"/><rect x="684.5" y="366.5" width="282" height="73" fill="none" stroke="#117dbb" stroke-width="1" shape-rendering="crispEdges"/></svg>
<svg style="left:392px;top:467px" width="577" height="67" viewBox="392 467 577 67"><rect x="392" y="467" width="577" height="67" fill="#fff"/><path d="M392.0 524.6 L470.5 524.6 L479.5 526.3 L519.5 526.3 L529.0 522.2 L568.0 522.2 L578.0 521.2 L617.5 521.0 L627.0 519.0 L636.7 516.3 L646.3 510.7 L657.0 497.0 L665.5 487.3 L674.0 488.6 L724.5 488.3 L734.6 485.0 L773.5 485.0 L781.2 486.1 L802.5 486.1 L813.0 485.0 L821.8 485.0 L830.6 488.3 L841.4 488.3 L850.4 491.4 L958.5 491.4 L969.0 490.3 L969.0 534 L392.0 534 Z" fill="#eef5fa"/><path d="M392 474.5H969M392 480.5H969M392 487.5H969M392 494.5H969M392 500.5H969M392 507.5H969M392 514.5H969M392 521.5H969M392 527.5H969M412.5 467V534M451.5 467V534M490.5 467V534M529.5 467V534M568.5 467V534M607.5 467V534M646.5 467V534M685.5 467V534M724.5 467V534M763.5 467V534M802.5 467V534M841.5 467V534M880.5 467V534M919.5 467V534M958.5 467V534" stroke="#d9e7f2" stroke-width="1" fill="none" shape-rendering="crispEdges"/><path d="M392.0 524.6 L470.5 524.6 L479.5 526.3 L519.5 526.3 L529.0 522.2 L568.0 522.2 L578.0 521.2 L617.5 521.0 L627.0 519.0 L636.7 516.3 L646.3 510.7 L657.0 497.0 L665.5 487.3 L674.0 488.6 L724.5 488.3 L734.6 485.0 L773.5 485.0 L781.2 486.1 L802.5 486.1 L813.0 485.0 L821.8 485.0 L830.6 488.3 L841.4 488.3 L850.4 491.4 L958.5 491.4 L969.0 490.3" stroke="#117dbb" stroke-width="1.2" fill="none" stroke-linejoin="round"/><rect x="392.5" y="467.5" width="576" height="66" fill="none" stroke="#117dbb" stroke-width="1" shape-rendering="crispEdges"/></svg>
<svg style="left:392px;top:554px" width="577" height="67" viewBox="392 554 577 67"><rect x="392" y="554" width="577" height="67" fill="#fff"/><path d="M392.0 620.0 L500.0 620.0 L520.0 619.4 L617.0 619.3 L636.7 617.0 L657.0 616.2 L703.0 615.9 L731.7 618.0 L780.0 619.7 L969.0 619.7 L969.0 621 L392.0 621 Z" fill="#eef5fa"/><path d="M392 561.5H969M392 567.5H969M392 574.5H969M392 581.5H969M392 588.5H969M392 594.5H969M392 601.5H969M392 608.5H969M392 614.5H969M412.5 554V621M451.5 554V621M490.5 554V621M529.5 554V621M568.5 554V621M607.5 554V621M646.5 554V621M685.5 554V621M724.5 554V621M763.5 554V621M802.5 554V621M841.5 554V621M880.5 554V621M919.5 554V621M958.5 554V621" stroke="#d9e7f2" stroke-width="1" fill="none" shape-rendering="crispEdges"/><path d="M392.0 620.0 L500.0 620.0 L520.0 619.4 L617.0 619.3 L636.7 617.0 L657.0 616.2 L703.0 615.9 L731.7 618.0 L780.0 619.7 L969.0 619.7" stroke="#117dbb" stroke-width="1.2" fill="none" stroke-linejoin="round"/><rect x="392.5" y="554.5" width="576" height="66" fill="none" stroke="#117dbb" stroke-width="1" shape-rendering="crispEdges"/></svg>
<svg style="left:394.5px;top:249.5px" width="8" height="5"><path d="M0.5 0.5l3.3 3.3l3.3-3.3" stroke="#707070" stroke-width="1" fill="none"/></svg>
<span class="t" style="left:407.18px;top:247px;font-size:12px;transform:scaleX(1.0326);transform-origin:0 0;">3D</span>
<span class="t" style="left:662.82px;top:247px;font-size:11px;color:#707070;transform:scaleX(0.9605);transform-origin:0 0;">4%</span>
<svg style="left:685px;top:249.5px" width="8" height="5"><path d="M0.5 0.5l3.3 3.3l3.3-3.3" stroke="#707070" stroke-width="1" fill="none"/></svg>
<span class="t" style="left:696.98px;top:247px;font-size:12px;transform:scaleX(1.0973);transform-origin:0 0;">Copy</span>
<span class="t" style="left:954.62px;top:247px;font-size:11px;color:#707070;transform:scaleX(0.9039);transform-origin:0 0;">1%</span>
<svg style="left:394.5px;top:350.5px" width="8" height="5"><path d="M0.5 0.5l3.3 3.3l3.3-3.3" stroke="#707070" stroke-width="1" fill="none"/></svg>
<span class="t" style="left:407.18px;top:348px;font-size:12px;transform:scaleX(1.0796);transform-origin:0 0;">Video Encode</span>
<span class="t" style="left:662.82px;top:348px;font-size:11px;color:#707070;transform:scaleX(0.9605);transform-origin:0 0;">0%</span>
<svg style="left:685px;top:350.5px" width="8" height="5"><path d="M0.5 0.5l3.3 3.3l3.3-3.3" stroke="#707070" stroke-width="1" fill="none"/></svg>
<span class="t" style="left:696.98px;top:348px;font-size:12px;transform:scaleX(1.1034);transform-origin:0 0;">Video Decode</span>
<span class="t" style="left:954.62px;top:348px;font-size:11px;color:#707070;transform:scaleX(0.9039);transform-origin:0 0;">0%</span>
<span class="t" style="left:392.22px;top:453px;font-size:11px;color:#707070;transform:scaleX(1.0107);transform-origin:0 0;">Dedicated GPU memory usage</span>
<span class="t" style="left:936.91px;top:453px;font-size:11px;color:#707070;transform:scaleX(0.9483);transform-origin:0 0;">6.0 GB</span>
<span class="t" style="left:392.22px;top:540px;font-size:11px;color:#707070;transform:scaleX(0.9985);transform-origin:0 0;">Shared GPU memory usage</span>
<span class="t" style="left:931.41px;top:540px;font-size:11px;color:#707070;transform:scaleX(0.9408);transform-origin:0 0;">16.0 GB</span>
<span class="t" style="left:389.98px;top:640px;font-size:12px;color:#707070;transform:scaleX(1.0196);transform-origin:0 0;">Utilisation</span>
<span class="t" style="left:389.97px;top:661px;font-size:18px;transform:scaleX(1.0478);transform-origin:0 0;">4%</span>
<span class="t" style="left:389.98px;top:691px;font-size:12px;color:#707070;transform:scaleX(0.9830);transform-origin:0 0;">GPU Memory</span>
<span class="t" style="left:389.97px;top:712px;font-size:18px;transform:scaleX(1.0530);transform-origin:0 0;">4.4/22.0 GB</span>
<span class="t" style="left:511.18px;top:640px;font-size:12px;color:#707070;transform:scaleX(0.9777);transform-origin:0 0;">Dedicated GPU memory</span>
<span class="t" style="left:511.17px;top:661px;font-size:18px;transform:scaleX(1.0407);transform-origin:0 0;">3.9/6.0 GB</span>
<span class="t" style="left:511.18px;top:691px;font-size:12px;color:#707070;transform:scaleX(0.9593);transform-origin:0 0;">Shared GPU memory</span>
<span class="t" style="left:511.17px;top:712px;font-size:18px;transform:scaleX(1.0510);transform-origin:0 0;">0.5/16.0 GB</span>
<span class="t" style="left:511.18px;top:742px;font-size:12px;color:#707070;transform:scaleX(0.9674);transform-origin:0 0;">GPU Temperature</span>
<span class="t" style="left:511.17px;top:763px;font-size:18px;transform:scaleX(1.0495);transform-origin:0 0;">50 °C</span>
<span class="t" style="left:650.18px;top:640px;font-size:12px;color:#707070;transform:scaleX(0.9688);transform-origin:0 0;">Driver version:</span>
<span class="t" style="left:813.08px;top:640px;font-size:12px;transform:scaleX(0.9040);transform-origin:0 0;">30.0.15.1215</span>
<span class="t" style="left:650.18px;top:658px;font-size:12px;color:#707070;transform:scaleX(0.9648);transform-origin:0 0;">Driver date:</span>
<span class="t" style="left:813.08px;top:658px;font-size:12px;transform:scaleX(0.9664);transform-origin:0 0;">17/03/2022</span>
<span class="t" style="left:650.18px;top:676px;font-size:12px;color:#707070;transform:scaleX(0.9663);transform-origin:0 0;">DirectX version:</span>
<span class="t" style="left:813.08px;top:676px;font-size:12px;transform:scaleX(0.9063);transform-origin:0 0;">12 (FL 12.1)</span>
<span class="t" style="left:650.18px;top:694px;font-size:12px;color:#707070;transform:scaleX(0.9917);transform-origin:0 0;">Physical location:</span>
<span class="t" style="left:813.08px;top:694px;font-size:12px;transform:scaleX(0.9632);transform-origin:0 0;">PCI bus 38, device 0, functi...</span>
<span class="t" style="left:650.18px;top:712px;font-size:12px;color:#707070;transform:scaleX(0.9789);transform-origin:0 0;">Hardware reserved memory:</span>
<span class="t" style="left:813.08px;top:712px;font-size:12px;transform:scaleX(0.9392);transform-origin:0 0;">164 MB</span>
<div style="left:996px;top:188px;width:15px;height:595px;background:#f0f0f0;"></div>
<div style="left:996px;top:205px;width:15px;height:544.5px;background:#cdcdcd;"></div>
<svg style="left:999.5px;top:193px" width="8" height="6"><path d="M0.7 5l3.3-3.4l3.3 3.4" stroke="#505050" stroke-width="1.900" fill="none"/></svg>
<svg style="left:999.5px;top:772px" width="8" height="6"><path d="M0.7 1l3.3 3.4l3.3-3.4" stroke="#505050" stroke-width="1.900" fill="none"/></svg>
<svg style="left:159px;top:797px" width="21" height="21" viewBox="0 0 21 21"><circle cx="10.5" cy="10.5" r="9.4" stroke="#8c8c8c" stroke-width="1" fill="#fff"/><path d="M6.3 12.4l4.2-4.2l4.2 4.2" stroke="#a0a0a0" stroke-width="1.3" fill="none"/></svg>
<span class="t" style="left:186.08px;top:802px;font-size:12px;transform:scaleX(0.9535);transform-origin:0 0;">Fewer <span style="position:static;text-decoration:underline">d</span>etails</span>
<div style="left:262px;top:800px;width:1px;height:14px;background:#d0d0d0;"></div>
<svg style="left:270px;top:799px" width="18" height="18" viewBox="0 0 18 18"><circle cx="9" cy="9" r="8" fill="#e9e6e2" stroke="#8c8c8c" stroke-width="1.2"/><circle cx="9" cy="9" r="6" fill="#fdfdfd" stroke="#c9c5c0" stroke-width="0.8"/><path d="M9.5 10.5L5.2 4.2" stroke="#c8102e" stroke-width="1.6"/><path d="M11.6 12.8L10.2 5.4" stroke="#444" stroke-width="0.9"/></svg>
<span class="t" style="left:292.08px;top:802px;font-size:12px;color:#0066cc;transform:scaleX(0.9901);transform-origin:0 0;">Open Resource Monitor</span>
</div>
</div>

<!-- RIGHT PANEL -->
<div id="rp">
<div id="rpo" style="left:-1138px;top:0;width:1502px;height:946px">
<div style="left:1132px;top:0px;width:370px;height:3px;background:#0c0c0c;"></div>
<div style="left:1138px;top:3px;width:364px;height:24px;background:#141414;"></div>
<div style="left:1138px;top:3px;width:160px;height:24px;background:#242424;border-radius:5px 5px 0 0"></div>
<svg style="left:1143px;top:6px" width="16" height="16" viewBox="0 0 16 16"><path d="M1 1h14v3H1zM6 6.5h9v3H6zM6 12h9v3H6z" fill="#c8c8c8"/><path d="M1.5 5v9M1.5 8h3M1.5 13.5h3" stroke="#8a8a8a" stroke-width="1" fill="none"/></svg>
<span class="t" style="left:1164.82px;top:8px;font-size:13px;color:#c0c0c0;transform:scaleX(0.9943);transform-origin:0 0;">Outliner</span>
<svg style="left:1276px;top:10.6px" width="8" height="8" viewBox="0 0 8 8"><path d="M0.8 0.8l6.4 6.4M7.2 0.8L0.8 7.2" stroke="#c8c8c8" stroke-width="1.5" fill="none"/></svg>
<div style="left:1138px;top:27px;width:364px;height:35px;background:#242424;"></div>
<div style="left:1146px;top:36px;width:297.5px;height:21.5px;background:#0f0f0f;border:1px solid #363636;border-radius:11px"></div>
<svg style="left:1150.6px;top:39.6px" width="16" height="16" viewBox="0 0 16 16"><circle cx="6.6" cy="6.6" r="5.2" stroke="#d0d0d0" stroke-width="1.4" fill="none"/><path d="M10.4 10.6l4.2 4.2" stroke="#d0d0d0" stroke-width="1.5"/></svg>
<span class="t" style="left:1173.72px;top:39px;font-size:13px;color:#5c5c5c;transform:scaleX(0.9795);transform-origin:0 0;">Search...</span>
<svg style="left:1454px;top:39px" width="16" height="15" viewBox="0 0 16 15"><path d="M0.8 2.2h5l1.4 1.8h8v9.6H0.8z" fill="#c8c8c8"/><path d="M7.8 6.2v5.6M5 9h5.6" stroke="#242424" stroke-width="1.6"/></svg>
<svg style="left:1477.6px;top:38.4px" width="17" height="17" viewBox="0 0 17 17"><g stroke="#c8c8c8" stroke-width="1.900"><path d="M8.5 0.6v15.8M0.6 8.5h15.8M2.9 2.9l11.2 11.2M14.1 2.9L2.9 14.1"/></g><circle cx="8.5" cy="8.5" r="5.300" fill="#c8c8c8"/><circle cx="8.5" cy="8.5" r="3.700" fill="#242424"/><circle cx="8.5" cy="8.5" r="1.700" fill="#a8a8a8"/></svg>
<div style="left:1138px;top:62px;width:364px;height:24px;background:#2f2f2f;"></div>
<div style="left:1162px;top:62px;width:1px;height:24px;background:#1c1c1c;"></div>
<div style="left:1187px;top:62px;width:1px;height:24px;background:#1c1c1c;"></div>
<div style="left:1413px;top:62px;width:1px;height:24px;background:#1c1c1c;"></div>
<svg style="left:1142px;top:68px" width="16" height="12" viewBox="0 0 16 12"><path d="M0.8 6C3 2.4 5.4 1 8 1s5 1.4 7.2 5C13 9.6 10.6 11 8 11S3 9.6 0.8 6z" stroke="#c8c8c8" stroke-width="1.2" fill="none"/><circle cx="8" cy="6" r="2.2" fill="#c8c8c8"/></svg>
<svg style="left:1169px;top:66px" width="11" height="16" viewBox="0 0 11 16"><path d="M3 0.8h5v1.4l-0.8 0.6v3.4c1.6 0.8 2.4 2 2.4 3.4H1.4c0-1.4 0.8-2.6 2.4-3.4V2.8L3 2.2z" fill="#c8c8c8"/><path d="M5.5 9.6v5.2" stroke="#c8c8c8" stroke-width="1.1"/></svg>
<span class="t" style="left:1191.52px;top:67px;font-size:13px;color:#c0c0c0;transform:scaleX(1.0059);transform-origin:0 0;">Item Label</span>
<svg style="left:1258px;top:71px" width="8" height="6"><path d="M0.4 5.2L4 0.8l3.6 4.4z" fill="#c8c8c8"/></svg>
<span class="t" style="left:1417.82px;top:67px;font-size:13px;color:#c0c0c0;transform:scaleX(1.0488);transform-origin:0 0;">Type</span>
<div style="left:1138px;top:86px;width:364px;height:152px;background:#181818;"></div>
<svg style="left:1142px;top:93px" width="16" height="9" viewBox="0 0 16 9"><path d="M0.8 1C3 4.4 5.4 5.4 8 5.4s5-1 7.2-4.4" stroke="#c8c8c8" stroke-width="1.2" fill="none"/><path d="M2.6 3.8L1.4 6M5.2 5.2l-.6 2.4M8 5.6V8M10.8 5.2l.6 2.4M13.4 3.8L14.6 6" stroke="#c8c8c8" stroke-width="1"/></svg>
<svg style="left:1208px;top:92px" width="17" height="14" viewBox="0 0 17 14"><path d="M1.6 10.4L5.6 1l2.6 5.4 2-3.2 3.6 7.2z" fill="#c8c8c8"/><path d="M0.6 12.8h15.8" stroke="#9a9a9a" stroke-width="1.2"/></svg>
<span class="t" style="left:1229.62px;top:91px;font-size:13px;color:#c0c0c0;transform:scaleX(1.0082);transform-origin:0 0;">emptyTestdelting (Editor)</span>
<span class="t" style="left:1420.52px;top:91px;font-size:13px;color:#8c8c8c;transform:scaleX(1.0133);transform-origin:0 0;">World</span>
<div style="left:1138px;top:238px;width:364px;height:33px;background:#2f2f2f;"></div>
<span class="t" style="left:1151.52px;top:248px;font-size:13px;color:#c0c0c0;transform:scaleX(1.0328);transform-origin:0 0;">0 actors</span>
<div style="left:1138px;top:271px;width:364px;height:30px;background:#181818;"></div>
<svg style="left:1142px;top:279px" width="17" height="16" viewBox="0 0 17 16"><path d="M1 14.6l1-4.2L11.4 1l3.2 3.2L5.2 13.6z" fill="#d0d0d0"/><path d="M1 2.4h6M1 5.6h3.4M9 11.2h7M7 14.4h9" stroke="#8a8a8a" stroke-width="1"/></svg>
<span class="t" style="left:1164.62px;top:281px;font-size:13px;color:#c0c0c0;transform:scaleX(1.0157);transform-origin:0 0;">Details</span>
<div style="left:1300px;top:276px;width:159.5px;height:25px;background:#242424;border-radius:5px 5px 0 0"></div>
<svg style="left:1305px;top:279.5px" width="16" height="16" viewBox="0 0 16 16"><circle cx="8" cy="8" r="7.4" fill="#8c8c8c"/><path d="M3 3.6c2-1 3.6-.8 4.2.6.4 1-.6 1.8-1.6 2.2-.8.4-1 1.4-.4 2.4.6 1 .4 2.4-.6 3.4C2.400 11 1.200 9 1.400 6.800 1.600 5.600 2.200 4.400 3 3.600zM9.400 8c1.400-.6 2.800-.2 3.400.8.600 1.200-.4 3-2 4.200-1 .6-1.600-.2-1.600-1.400 0-1-.8-1.400-.8-2.200 0-.600.400-1.200 1-1.400zM9 1.400c1.600 0 3.200.8 4.200 2-1.200.6-2.600.6-3.400-.2-.4-.6-.8-1.200-.8-1.800z" fill="#d8d8d8"/></svg>
<span class="t" style="left:1326.32px;top:281px;font-size:13px;color:#c0c0c0;transform:scaleX(0.9984);transform-origin:0 0;">World Settings</span>
<svg style="left:1438.2px;top:283.6px" width="8" height="8" viewBox="0 0 8 8"><path d="M0.8 0.8l6.4 6.4M7.2 0.8L0.8 7.2" stroke="#c8c8c8" stroke-width="1.5" fill="none"/></svg>
<div style="left:1138px;top:301px;width:364px;height:38px;background:#242424;"></div>
<div style="left:1146px;top:309.5px;width:301.5px;height:21px;background:#0f0f0f;border:1px solid #363636;border-radius:11px"></div>
<svg style="left:1151.3px;top:312.6px" width="16" height="16" viewBox="0 0 16 16"><circle cx="6.6" cy="6.6" r="5.2" stroke="#d0d0d0" stroke-width="1.4" fill="none"/><path d="M10.4 10.6l4.2 4.2" stroke="#d0d0d0" stroke-width="1.5"/></svg>
<span class="t" style="left:1173.82px;top:312px;font-size:13px;color:#5c5c5c;transform:scaleX(1.0211);transform-origin:0 0;">Search</span>
<svg style="left:1460.5px;top:312.800px" width="15" height="14.400" viewBox="0 0 15 14"><rect x="0.8" y="0.8" width="13.4" height="12.4" stroke="#c8c8c8" stroke-width="1.4" fill="none"/><rect x="0.8" y="0.8" width="13.4" height="2.600" fill="#c8c8c8"/><path d="M0.8 6.700h13.400M0.8 10h13.400M7.500 3.400v9.800" stroke="#c8c8c8" stroke-width="1.200"/></svg>
<svg style="left:1484.2px;top:312px" width="17" height="17" viewBox="0 0 17 17"><g stroke="#c8c8c8" stroke-width="1.900"><path d="M8.5 0.6v15.8M0.6 8.5h15.8M2.9 2.9l11.2 11.2M14.1 2.9L2.9 14.1"/></g><circle cx="8.5" cy="8.5" r="5.300" fill="#c8c8c8"/><circle cx="8.5" cy="8.5" r="3.700" fill="#242424"/><circle cx="8.5" cy="8.5" r="1.700" fill="#a8a8a8"/></svg>
<div style="left:1138px;top:339px;width:350px;height:26px;background:#2f2f2f;"></div>
<div style="left:1138px;top:365px;width:350px;height:1px;background:#161616;"></div>
<span class="t" style="left:1159.74px;top:346px;font-size:11px;color:#c0c0c0;font-weight:bold;transform:scaleX(0.9665);transform-origin:0 0;">Precomputed Visibility</span>
<svg style="left:1142.6px;top:349px" width="11" height="7"><path d="M0.400 0.600h10.200L5.500 6.400z" fill="#a0a0a0"/></svg>
<div style="left:1138px;top:366px;width:350px;height:26px;background:#242424;"></div>
<div style="left:1138px;top:392px;width:350px;height:1px;background:#161616;"></div>
<div style="left:1312.5px;top:366px;width:1px;height:26px;background:#1b1b1b;"></div>
<div style="left:1465px;top:366px;width:1px;height:26px;background:#1b1b1b;"></div>
<span class="t" style="left:1159.74px;top:373px;font-size:11px;color:#c0c0c0;transform:scaleX(1.0601);transform-origin:0 0;">Precompute Visibility</span>
<div style="left:1326px;top:370px;width:17px;height:17px;background:#0f0f0f;border:1px solid #303030;border-radius:3px"></div>
<div style="left:1138px;top:393px;width:350px;height:26px;background:#242424;"></div>
<div style="left:1138px;top:419px;width:350px;height:1px;background:#161616;"></div>
<span class="t" style="left:1159.74px;top:400px;font-size:11px;color:#c0c0c0;transform:scaleX(1.0203);transform-origin:0 0;">Advanced</span>
<svg style="left:1144.6px;top:401px" width="7" height="11"><path d="M0.600 0.400v10.200L6.600 5.500z" fill="#a0a0a0"/></svg>
<div style="left:1138px;top:420px;width:350px;height:26px;background:#2f2f2f;"></div>
<div style="left:1138px;top:446px;width:350px;height:1px;background:#161616;"></div>
<span class="t" style="left:1159.74px;top:427px;font-size:11px;color:#c0c0c0;font-weight:bold;transform:scaleX(0.9739);transform-origin:0 0;">Game Mode</span>
<svg style="left:1142.6px;top:430px" width="11" height="7"><path d="M0.400 0.600h10.200L5.500 6.400z" fill="#a0a0a0"/></svg>
<div style="left:1138px;top:447px;width:350px;height:26px;background:#242424;"></div>
<div style="left:1138px;top:473px;width:350px;height:1px;background:#161616;"></div>
<div style="left:1312.5px;top:447px;width:1px;height:26px;background:#1b1b1b;"></div>
<div style="left:1465px;top:447px;width:1px;height:26px;background:#1b1b1b;"></div>
<span class="t" style="left:1159.74px;top:454px;font-size:11px;color:#c0c0c0;transform:scaleX(1.0079);transform-origin:0 0;">GameMode Override</span>
<div style="left:1325.6px;top:450px;width:123.2px;height:20px;background:#0f0f0f;border:1px solid #383838;border-radius:3px"></div>
<div style="left:1332px;top:452px;width:91.500px;height:16px;overflow:hidden"><span class="t" style="left:0.34px;top:2px;font-size:11px;color:#c0c0c0;transform:scaleX(0.9539);transform-origin:0 0;">ALS_GameMode_SP</span></div>
<svg style="left:1427.5px;top:457.5px" width="10" height="6" viewBox="0 0 10 6"><path d="M0.8 0.8L5 5l4.200-4.200" stroke="#c8c8c8" stroke-width="1.5" fill="none"/></svg>
<div style="left:1452.500px;top:452px;width:12.500px;height:16px;overflow:hidden"><svg style="left:0.5px;top:0px" width="16" height="16" viewBox="0 0 16 16"><path d="M12.600 3.200A6.600 6.600 0 1 0 12.600 12.800" stroke="#c8c8c8" stroke-width="1.500" fill="none"/><path d="M14.800 8H5M8.600 4.200L4.800 8l3.800 3.800" stroke="#c8c8c8" stroke-width="1.500" fill="none"/></svg></div>
<svg style="left:1469.8px;top:454.5px" width="12" height="10.200" viewBox="0 0 13 11"><path d="M4.600 0.800L1 4.200l3.600 3.400M1.200 4.200h7.200c2.400 0 3.800 1.400 3.800 3.200s-1.400 3-3.400 3" stroke="#c8c8c8" stroke-width="1.4" fill="none"/></svg>
<div style="left:1138px;top:474px;width:350px;height:26px;background:#242424;"></div>
<div style="left:1138px;top:500px;width:350px;height:1px;background:#161616;"></div>
<div style="left:1312.5px;top:474px;width:1px;height:26px;background:#1b1b1b;"></div>
<div style="left:1465px;top:474px;width:1px;height:26px;background:#1b1b1b;"></div>
<span class="t" style="left:1159.74px;top:481px;font-size:11px;color:#c0c0c0;transform:scaleX(1.0115);transform-origin:0 0;">Selected GameMode</span>
<svg style="left:1144.6px;top:482px" width="7" height="11"><path d="M0.600 0.400v10.200L6.600 5.500z" fill="#a0a0a0"/></svg>
<div style="left:1138px;top:501px;width:350px;height:26px;background:#2f2f2f;"></div>
<div style="left:1138px;top:527px;width:350px;height:1px;background:#161616;"></div>
<span class="t" style="left:1159.74px;top:508px;font-size:11px;color:#c0c0c0;font-weight:bold;transform:scaleX(0.9656);transform-origin:0 0;">Lightmass</span>
<svg style="left:1142.6px;top:511px" width="11" height="7"><path d="M0.400 0.600h10.200L5.500 6.400z" fill="#a0a0a0"/></svg>
<div style="left:1138px;top:528px;width:350px;height:26px;background:#242424;"></div>
<div style="left:1138px;top:554px;width:350px;height:1px;background:#161616;"></div>
<div style="left:1312.5px;top:528px;width:1px;height:26px;background:#1b1b1b;"></div>
<div style="left:1465px;top:528px;width:1px;height:26px;background:#1b1b1b;"></div>
<span class="t" style="left:1159.74px;top:535px;font-size:11px;color:#c0c0c0;transform:scaleX(1.0590);transform-origin:0 0;">Lightmass Settings</span>
<svg style="left:1144.6px;top:536px" width="7" height="11"><path d="M0.600 0.400v10.200L6.600 5.500z" fill="#a0a0a0"/></svg>
<div style="left:1138px;top:555px;width:350px;height:26px;background:#242424;"></div>
<div style="left:1138px;top:581px;width:350px;height:1px;background:#161616;"></div>
<span class="t" style="left:1159.74px;top:562px;font-size:11px;color:#c0c0c0;transform:scaleX(1.0203);transform-origin:0 0;">Advanced</span>
<svg style="left:1144.6px;top:563px" width="7" height="11"><path d="M0.600 0.400v10.200L6.600 5.500z" fill="#a0a0a0"/></svg>
<div style="left:1138px;top:582px;width:350px;height:26px;background:#2f2f2f;"></div>
<div style="left:1138px;top:608px;width:350px;height:1px;background:#161616;"></div>
<span class="t" style="left:1159.74px;top:589px;font-size:11px;color:#c0c0c0;font-weight:bold;transform:scaleX(0.9697);transform-origin:0 0;">World</span>
<svg style="left:1142.6px;top:592px" width="11" height="7"><path d="M0.400 0.600h10.200L5.500 6.400z" fill="#a0a0a0"/></svg>
<div style="left:1138px;top:609px;width:350px;height:26px;background:#242424;"></div>
<div style="left:1138px;top:635px;width:350px;height:1px;background:#161616;"></div>
<div style="left:1312.5px;top:609px;width:1px;height:26px;background:#1b1b1b;"></div>
<div style="left:1465px;top:609px;width:1px;height:26px;background:#1b1b1b;"></div>
<span class="t" style="left:1159.74px;top:616px;font-size:11px;color:#c0c0c0;transform:scaleX(1.0068);transform-origin:0 0;">Enable World Composition</span>
<div style="left:1326px;top:613px;width:17px;height:17px;background:#0f0f0f;border:1px solid #303030;border-radius:3px"></div>
<div style="left:1138px;top:636px;width:350px;height:26px;background:#242424;"></div>
<div style="left:1138px;top:662px;width:350px;height:1px;background:#161616;"></div>
<div style="left:1312.5px;top:636px;width:1px;height:26px;background:#1b1b1b;"></div>
<div style="left:1465px;top:636px;width:1px;height:26px;background:#1b1b1b;"></div>
<span class="t" style="left:1159.74px;top:643px;font-size:11px;color:#c0c0c0;transform:scaleX(1.0037);transform-origin:0 0;">Use Client Side Level Strea...</span>
<div style="left:1326px;top:640px;width:17px;height:17px;background:#0f0f0f;border:1px solid #303030;border-radius:3px"></div>
<div style="left:1138px;top:663px;width:350px;height:26px;background:#242424;"></div>
<div style="left:1138px;top:689px;width:350px;height:1px;background:#161616;"></div>
<div style="left:1312.5px;top:663px;width:1px;height:26px;background:#1b1b1b;"></div>
<div style="left:1465px;top:663px;width:1px;height:26px;background:#1b1b1b;"></div>
<span class="t" style="left:1159.74px;top:670px;font-size:11px;color:#666666;transform:scaleX(1.0686);transform-origin:0 0;">Kill Z</span>
<div style="left:1326px;top:667px;width:123px;height:18px;background:#121212;border:1px solid #2c2c2c;border-radius:3px"></div>
<span class="t" style="left:1333.54px;top:670px;font-size:11px;color:#666666;transform:scaleX(1.0334);transform-origin:0 0;">-1048575.0</span>
<div style="left:1138px;top:690px;width:350px;height:26px;background:#242424;"></div>
<div style="left:1138px;top:716px;width:350px;height:1px;background:#161616;"></div>
<span class="t" style="left:1159.74px;top:697px;font-size:11px;color:#c0c0c0;transform:scaleX(1.0203);transform-origin:0 0;">Advanced</span>
<svg style="left:1142.6px;top:700px" width="11" height="7"><path d="M0.400 0.600h10.200L5.500 6.400z" fill="#a0a0a0"/></svg>
<div style="left:1138px;top:717px;width:350px;height:26px;background:#242424;"></div>
<div style="left:1138px;top:743px;width:350px;height:1px;background:#161616;"></div>
<div style="left:1312.5px;top:717px;width:1px;height:26px;background:#1b1b1b;"></div>
<div style="left:1465px;top:717px;width:1px;height:26px;background:#1b1b1b;"></div>
<span class="t" style="left:1159.74px;top:724px;font-size:11px;color:#c0c0c0;transform:scaleX(0.9883);transform-origin:0 0;">Enable Large Worlds</span>
<div style="left:1326px;top:721px;width:17px;height:17px;background:#0f0f0f;border:1px solid #303030;border-radius:3px"></div>
<div style="left:1138px;top:744px;width:350px;height:26px;background:#242424;"></div>
<div style="left:1138px;top:770px;width:350px;height:1px;background:#161616;"></div>
<div style="left:1312.5px;top:744px;width:1px;height:26px;background:#1b1b1b;"></div>
<div style="left:1465px;top:744px;width:1px;height:26px;background:#1b1b1b;"></div>
<span class="t" style="left:1159.74px;top:751px;font-size:11px;color:#c0c0c0;transform:scaleX(0.9896);transform-origin:0 0;">Enable World Bounds Checks</span>
<div style="left:1326px;top:748px;width:17px;height:17px;background:#0f0f0f;border:1px solid #303030;border-radius:3px"></div>
<svg style="left:1470.2px;top:752.3px" width="12" height="10.200" viewBox="0 0 13 11"><path d="M4.600 0.800L1 4.200l3.600 3.400M1.200 4.200h7.200c2.400 0 3.800 1.400 3.800 3.200s-1.400 3-3.400 3" stroke="#c8c8c8" stroke-width="1.4" fill="none"/></svg>
<div style="left:1138px;top:771px;width:350px;height:26px;background:#242424;"></div>
<div style="left:1138px;top:797px;width:350px;height:1px;background:#161616;"></div>
<div style="left:1312.5px;top:771px;width:1px;height:26px;background:#1b1b1b;"></div>
<div style="left:1465px;top:771px;width:1px;height:26px;background:#1b1b1b;"></div>
<span class="t" style="left:1159.74px;top:778px;font-size:11px;color:#c0c0c0;transform:scaleX(1.0422);transform-origin:0 0;">Minimize BSPSections</span>
<div style="left:1326px;top:775px;width:17px;height:17px;background:#0f0f0f;border:1px solid #303030;border-radius:3px"></div>
<div style="left:1138px;top:798px;width:350px;height:26px;background:#242424;"></div>
<div style="left:1138px;top:824px;width:350px;height:1px;background:#161616;"></div>
<div style="left:1312.5px;top:798px;width:1px;height:26px;background:#1b1b1b;"></div>
<div style="left:1465px;top:798px;width:1px;height:26px;background:#1b1b1b;"></div>
<span class="t" style="left:1159.74px;top:805px;font-size:11px;color:#c0c0c0;transform:scaleX(1.0439);transform-origin:0 0;">Navigation System Config</span>
<svg style="left:1144.6px;top:806px" width="7" height="11"><path d="M0.600 0.400v10.200L6.600 5.500z" fill="#a0a0a0"/></svg>
<div style="left:1325.6px;top:801px;width:136.6px;height:20px;background:#0f0f0f;border:1px solid #383838;border-radius:3px"></div>
<svg style="left:1332.500px;top:803.5px"  width="15.400" height="15.400" viewBox="0 0 16 16"><circle cx="8" cy="8" r="7.100" stroke="#ececec" stroke-width="1.300" fill="none"/><path d="M8 2.600l4.700 2.600v5.600L8 13.500l-4.700-2.700V5.200z" fill="#ececec"/><path d="M3.300 5.200L8 7.900l4.700-2.700M8 7.900v5.600" stroke="#0f0f0f" stroke-width="1.100" fill="none"/></svg>
<span class="t" style="left:1352.44px;top:805px;font-size:11px;color:#c0c0c0;transform:scaleX(1.0247);transform-origin:0 0;">Generic Navigati</span>
<svg style="left:1440.4px;top:808.5px" width="10" height="6" viewBox="0 0 10 6"><path d="M0.8 0.8L5 5l4.200-4.200" stroke="#c8c8c8" stroke-width="1.5" fill="none"/></svg>
<div style="left:1138px;top:825px;width:350px;height:26px;background:#242424;"></div>
<div style="left:1138px;top:851px;width:350px;height:1px;background:#161616;"></div>
<div style="left:1312.5px;top:825px;width:1px;height:26px;background:#1b1b1b;"></div>
<div style="left:1465px;top:825px;width:1px;height:26px;background:#1b1b1b;"></div>
<span class="t" style="left:1159.74px;top:832px;font-size:11px;color:#666666;transform:scaleX(1.0269);transform-origin:0 0;">Kill ZDamage Type</span>
<div style="left:1325.6px;top:827.6px;width:32.7px;height:20.7px;background:#363636;border-radius:4px"></div>
<svg style="left:1337.2px;top:835px" width="10" height="6" viewBox="0 0 10 6"><path d="M0.8 0.8L5 5l4.200-4.200" stroke="#6a6a6a" stroke-width="1.5" fill="none"/></svg>
<svg style="left:1365.6px;top:830px" width="16" height="16" viewBox="0 0 16 16"><path d="M12.600 3.200A6.600 6.600 0 1 0 12.600 12.800" stroke="#5e5e5e" stroke-width="1.500" fill="none"/><path d="M14.800 8H5M8.600 4.200L4.800 8l3.800 3.800" stroke="#5e5e5e" stroke-width="1.500" fill="none"/></svg>
<svg style="left:1391px;top:830px" width="17" height="16" viewBox="0 0 17 16"><path d="M0.800 1h4.800l1.400 1.800h3.400v4.600c-2.400.4-3.600 2.400-3.200 4.600H0.800z" fill="#5e5e5e"/><circle cx="11.400" cy="10" r="3.400" stroke="#5e5e5e" stroke-width="1.300" fill="none"/><path d="M8.800 12.600L6.400 15" stroke="#5e5e5e" stroke-width="1.400"/></svg>
<svg style="left:1418px;top:830px" width="16" height="16" viewBox="0 0 16 16"><circle cx="8" cy="8" r="6.800" stroke="#5e5e5e" stroke-width="1.400" fill="none"/><path d="M8 4.600v6.800M4.600 8h6.800" stroke="#5e5e5e" stroke-width="1.500"/></svg>
<svg style="left:1446px;top:832px" width="12" height="12" viewBox="0 0 12 12"><path d="M1 1l10 10M11 1L1 11" stroke="#5e5e5e" stroke-width="1.500"/></svg>
<div style="left:1138px;top:852px;width:350px;height:26px;background:#242424;"></div>
<div style="left:1138px;top:878px;width:350px;height:1px;background:#161616;"></div>
<div style="left:1312.5px;top:852px;width:1px;height:26px;background:#1b1b1b;"></div>
<div style="left:1465px;top:852px;width:1px;height:26px;background:#1b1b1b;"></div>
<span class="t" style="left:1159.74px;top:859px;font-size:11px;color:#c0c0c0;transform:scaleX(1.0185);transform-origin:0 0;">Default Color Scale</span>
<svg style="left:1144.6px;top:860px" width="7" height="11"><path d="M0.600 0.400v10.200L6.600 5.500z" fill="#a0a0a0"/></svg>
<div style="left:1325.6px;top:856px;width:42.600000000000136px;height:18px;background:#0f0f0f;border:1px solid #383838;border-radius:3px"></div>
<span class="t" style="left:1334.04px;top:859px;font-size:11px;color:#c0c0c0;transform:scaleX(1.0542);transform-origin:0 0;">1.0</span>
<div style="left:1372.5px;top:856px;width:42.5px;height:18px;background:#0f0f0f;border:1px solid #383838;border-radius:3px"></div>
<span class="t" style="left:1380.94px;top:859px;font-size:11px;color:#c0c0c0;transform:scaleX(1.0542);transform-origin:0 0;">1.0</span>
<div style="left:1419.9px;top:856px;width:42.299999999999955px;height:18px;background:#0f0f0f;border:1px solid #383838;border-radius:3px"></div>
<span class="t" style="left:1428.34px;top:859px;font-size:11px;color:#c0c0c0;transform:scaleX(1.0542);transform-origin:0 0;">1.0</span>
<div style="left:1138px;top:879px;width:350px;height:26px;background:#2f2f2f;"></div>
<div style="left:1138px;top:905px;width:350px;height:1px;background:#161616;"></div>
<span class="t" style="left:1159.74px;top:886px;font-size:11px;color:#c0c0c0;font-weight:bold;transform:scaleX(0.9720);transform-origin:0 0;">Physics</span>
<svg style="left:1142.6px;top:889px" width="11" height="7"><path d="M0.400 0.600h10.200L5.500 6.400z" fill="#a0a0a0"/></svg>
<div style="left:1138px;top:906px;width:350px;height:26px;background:#242424;"></div>
<div style="left:1138px;top:932px;width:350px;height:1px;background:#161616;"></div>
<div style="left:1312.5px;top:906px;width:1px;height:26px;background:#1b1b1b;"></div>
<div style="left:1465px;top:906px;width:1px;height:26px;background:#1b1b1b;"></div>
<span class="t" style="left:1159.74px;top:913px;font-size:11px;color:#c0c0c0;transform:scaleX(1.0113);transform-origin:0 0;">Override World Gravity</span>
<div style="left:1326px;top:910px;width:17px;height:17px;background:#0f0f0f;border:1px solid #303030;border-radius:3px"></div>
<div style="left:1138px;top:933px;width:350px;height:26px;background:#242424;"></div>
<div style="left:1138px;top:959px;width:350px;height:1px;background:#161616;"></div>
<div style="left:1312.5px;top:933px;width:1px;height:26px;background:#1b1b1b;"></div>
<div style="left:1465px;top:933px;width:1px;height:26px;background:#1b1b1b;"></div>
<span class="t" style="left:1159.74px;top:940px;font-size:11px;color:#666666;transform:scaleX(1.0057);transform-origin:0 0;">Global Gravity Z</span>
<div style="left:1326px;top:937px;width:123px;height:18px;background:#121212;border:1px solid #2c2c2c;border-radius:3px"></div>
<span class="t" style="left:1333.54px;top:940px;font-size:11px;color:#666666;transform:scaleX(1.0542);transform-origin:0 0;">0.0</span>
<div style="left:1488px;top:339px;width:14px;height:607px;background:#1a1a1a;"></div>
<div style="left:1492px;top:340.5px;width:9.5px;height:219px;background:#4a4a4a;border-radius:4.500px"></div>
</div>
</div>
</div>
</body>
</html>
